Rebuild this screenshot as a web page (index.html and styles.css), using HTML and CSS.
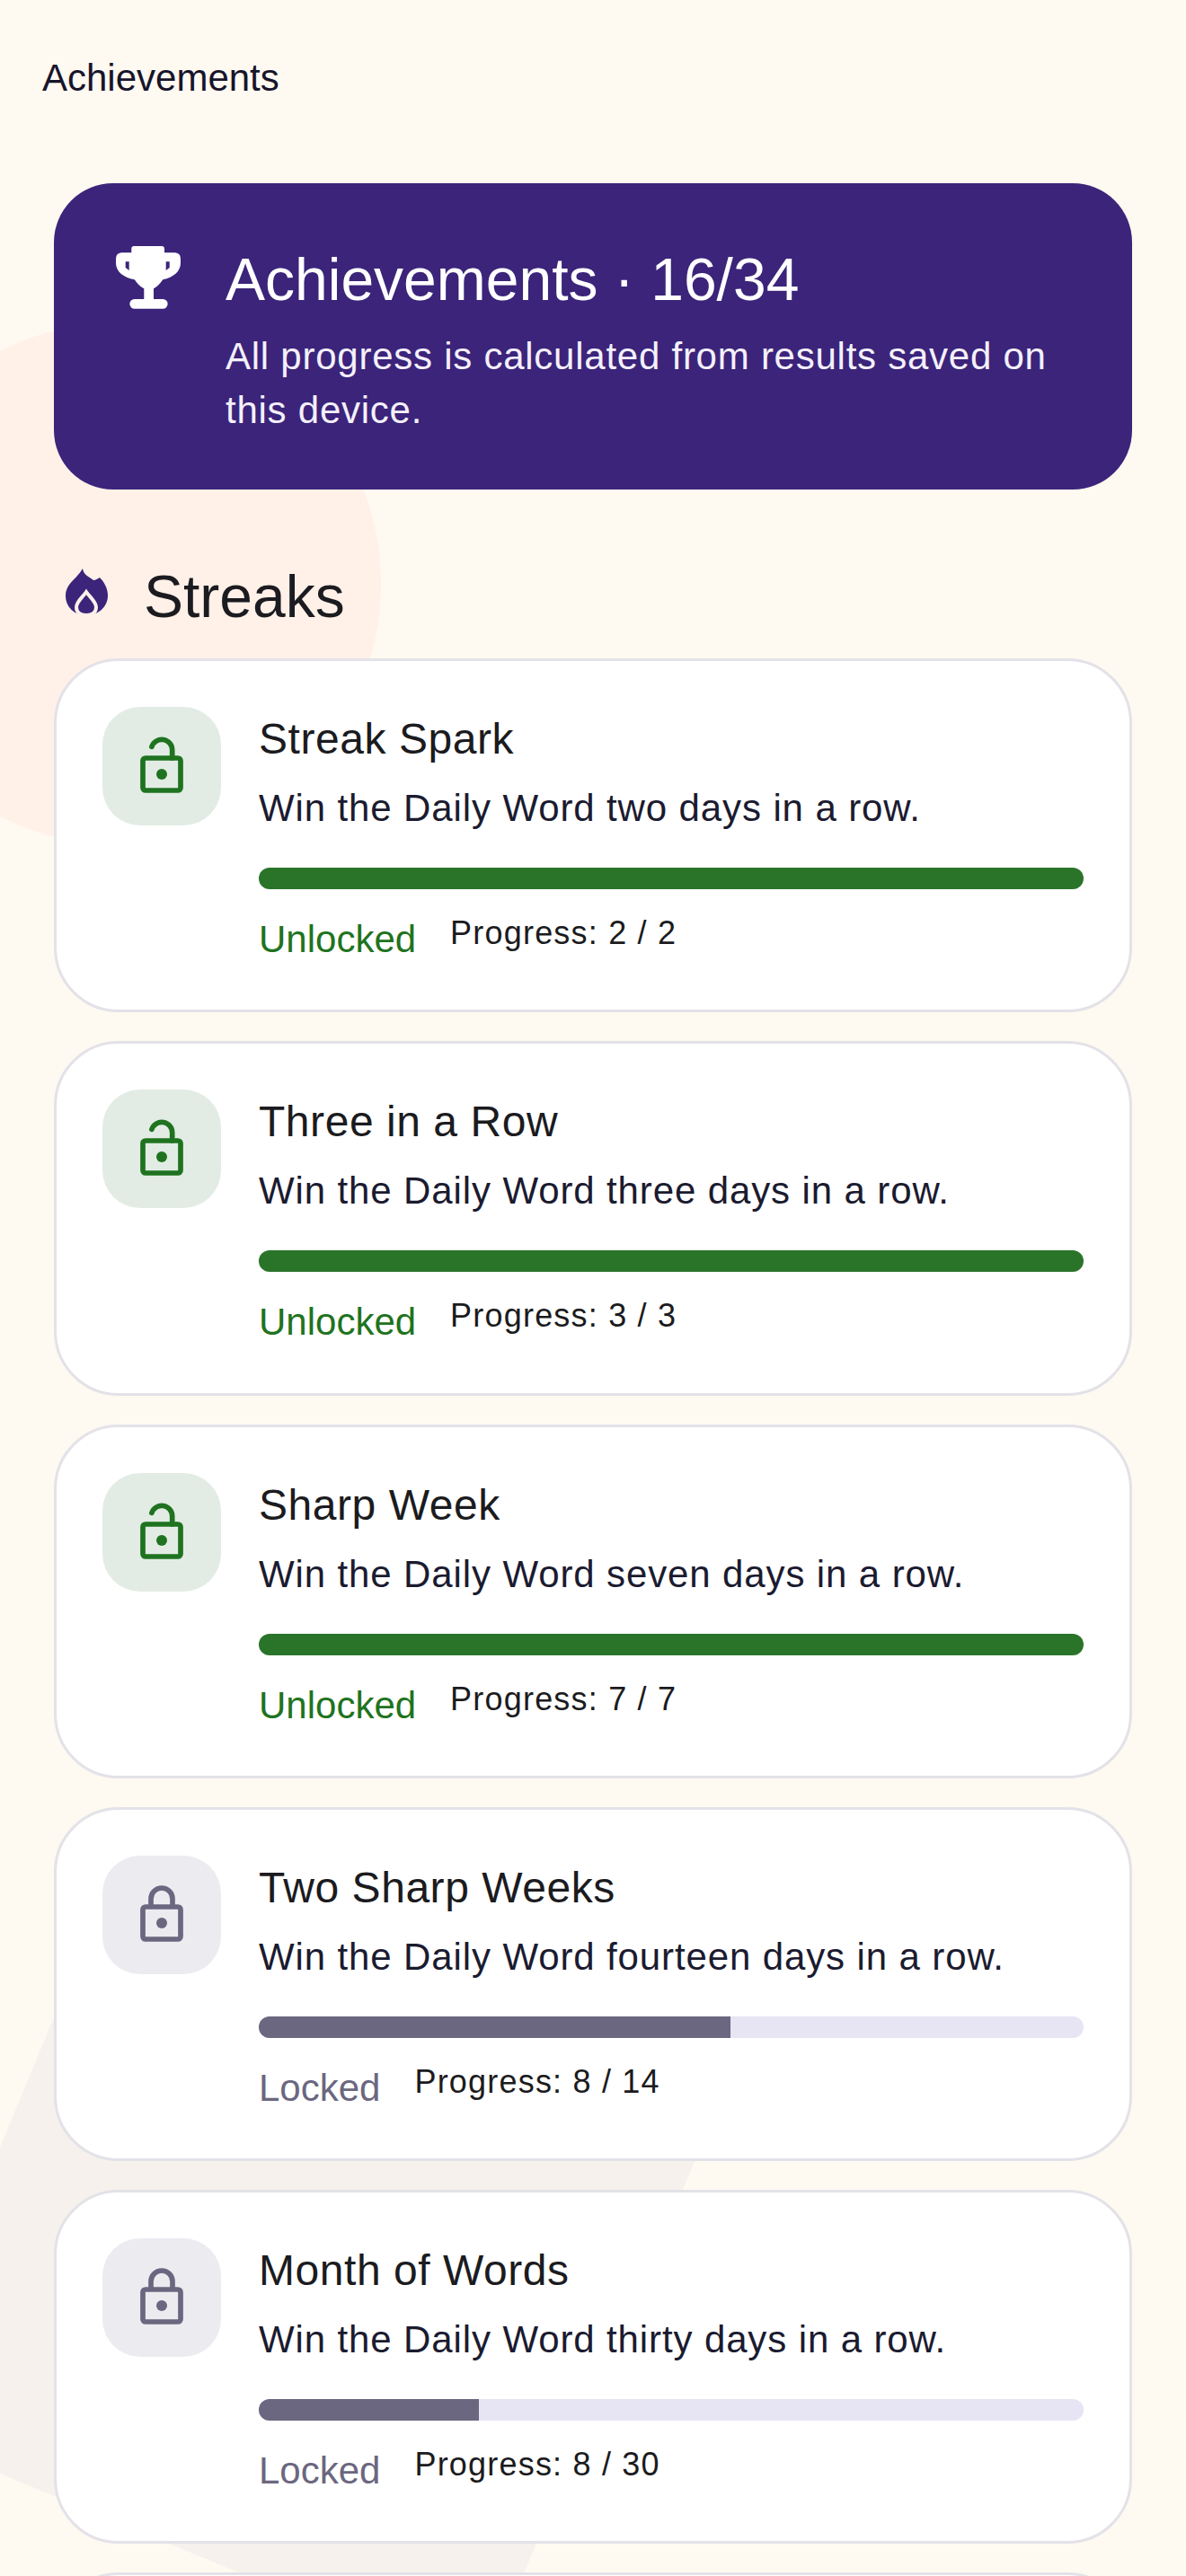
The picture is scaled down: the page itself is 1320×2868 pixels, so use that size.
FILE: index.html
```html
<!DOCTYPE html>
<html lang="en">
<head>
<meta charset="UTF-8">
<title>Achievements</title>
<link rel="stylesheet" href="styles.css">
</head>
<body>
<div class="blob blob-peach"></div>
<div class="blob blob-grey"></div>

<header class="appbar">Achievements</header>

<main class="content">
	<section class="banner">
		<svg class="banner-icon" viewBox="-6 -6 84 84"><path fill="#fff" fill-rule="evenodd" d="M20 1H51Q54 1 54 4V8.300H66Q72 9 72 15V20C72 29 64 36 52.300 38.300C49 43 46 46 42 48.300V60H52.300A5.300 5.300 0 0 1 52.300 70.700H20.700A5.300 5.300 0 0 1 20.700 60H31.300V48.300C27 46 24 43 20.700 38.300C8 36 0 29 0 20V15Q0 9 6 8.300H17.300V4Q17.300 1 20 1ZM10.700 18.300V25L14.700 28V18.300ZM55.700 18.300V28L59.700 25V18.300Z"/></svg>
		<div>
			<h1 class="banner-title">Achievements · 16/34</h1>
			<p class="banner-text">All progress is calculated from results saved on this device.</p>
		</div>
	</section>

	<h2 class="section-title">
		<svg class="section-icon" viewBox="0 0 48 53">
			<path fill="#3b247a" d="M20 1C21 8 27 10 32 14C34 14 37 12 39 11C44 16 48 23 48 31C48 44 37 53 24 53C11 53 1 44 1 31C1 20 10 14 14 9C16 7 18 4 20 1Z"/>
			<path fill="#3b247a" stroke="#fff1e8" stroke-width="4" d="M24 27C28 33 35 38 35 44C35 50 30 53 24 53C18 53 13 50 13 44C13 38 20 33 24 27Z"/>
		</svg>
		Streaks
	</h2>

	<article class="card unlocked">
		<div class="badge"><svg viewBox="0 0 24 24"><use href="#lock-open"/></svg></div>
		<div class="card-body">
			<h3 class="card-title">Streak Spark</h3>
			<p class="card-text">Win the Daily Word two days in a row.</p>
			<div class="track"><div class="fill" style="width:100%"></div></div>
			<div class="meta"><span class="status">Unlocked</span><span class="progress">Progress: 2 / 2</span></div>
		</div>
	</article>

	<article class="card unlocked">
		<div class="badge"><svg viewBox="0 0 24 24"><use href="#lock-open"/></svg></div>
		<div class="card-body">
			<h3 class="card-title">Three in a Row</h3>
			<p class="card-text">Win the Daily Word three days in a row.</p>
			<div class="track"><div class="fill" style="width:100%"></div></div>
			<div class="meta"><span class="status">Unlocked</span><span class="progress">Progress: 3 / 3</span></div>
		</div>
	</article>

	<article class="card unlocked">
		<div class="badge"><svg viewBox="0 0 24 24"><use href="#lock-open"/></svg></div>
		<div class="card-body">
			<h3 class="card-title">Sharp Week</h3>
			<p class="card-text">Win the Daily Word seven days in a row.</p>
			<div class="track"><div class="fill" style="width:100%"></div></div>
			<div class="meta"><span class="status">Unlocked</span><span class="progress">Progress: 7 / 7</span></div>
		</div>
	</article>

	<article class="card locked">
		<div class="badge"><svg viewBox="0 0 24 24"><use href="#lock-closed"/></svg></div>
		<div class="card-body">
			<h3 class="card-title">Two Sharp Weeks</h3>
			<p class="card-text">Win the Daily Word fourteen days in a row.</p>
			<div class="track"><div class="fill" style="width:57.14%"></div></div>
			<div class="meta"><span class="status">Locked</span><span class="progress">Progress: 8 / 14</span></div>
		</div>
	</article>

	<article class="card locked">
		<div class="badge"><svg viewBox="0 0 24 24"><use href="#lock-closed"/></svg></div>
		<div class="card-body">
			<h3 class="card-title">Month of Words</h3>
			<p class="card-text">Win the Daily Word thirty days in a row.</p>
			<div class="track"><div class="fill" style="width:26.67%"></div></div>
			<div class="meta"><span class="status">Locked</span><span class="progress">Progress: 8 / 30</span></div>
		</div>
	</article>

	<article class="card locked"></article>
</main>

<svg class="sprites" width="0" height="0">
	<symbol id="lock-open" viewBox="0 0 24 24">
		<g fill="none" stroke="currentColor" stroke-width="1.900" stroke-linecap="round">
			<rect x="5" y="9" width="14" height="12" rx="1"/>
			<path d="M8.300 4.800A3.900 3.900 0 0 1 15.900 6V9"/>
		</g>
		<circle cx="12" cy="15" r="2" fill="currentColor"/>
	</symbol>
	<symbol id="lock-closed" viewBox="0 0 24 24">
		<g fill="none" stroke="currentColor" stroke-width="1.900">
			<rect x="5" y="9" width="14" height="12" rx="1"/>
			<path d="M8 9V6a4 4 0 0 1 8 0v3"/>
		</g>
		<circle cx="12" cy="15" r="2" fill="currentColor"/>
	</symbol>
</svg>
</body>
</html>
```
FILE: styles.css
```css
*{
	margin: 0;
	padding: 0;
	box-sizing: border-box;
}
html,body{
	width: 100%;
	height: 100%;
	overflow: hidden;
}
body{
	position: relative;
	background-color: #fef9f1;
	color: #1b1b20;
	font-family: "Liberation Sans", Arial, sans-serif;
}

.blob{
	position: absolute;
}
.blob-peach{
	left: -158px;
	top: 359px;
	width: 582px;
	height: 582px;
	border-radius: 50%;
	background-color: #fff1e8;
}
.blob-grey{
	left: -18px;
	top: 2146px;
	width: 720px;
	height: 720px;
	border-radius: 60px;
	background-color: #f6f1ec;
	transform: rotate(22.5deg);
}

.appbar{
	position: relative;
	height: 204px;
	padding: 65px 0 0 47px;
	font-size: 42px;
	line-height: 44px;
	color: #17152b;
}

.content{
	position: relative;
	height: 2664px;
	overflow: hidden;
	padding: 0 60px;
	display: flex;
	flex-direction: column;
	gap: 32px;
}

.banner{
	display: flex;
	flex: none;
	gap: 44px;
	height: 341px;
	padding: 63px;
	background-color: #3b247a;
	border-radius: 66px;
	color: #fff;
}
.banner-icon{
	width: 84px;
	height: 84px;
	flex: none;
}
.banner-title{
	margin-top: 8px;
	font-size: 66px;
	font-weight: normal;
	line-height: 72px;
}
.banner-text{
	margin-top: 20px;
	font-size: 42px;
	line-height: 60px;
	letter-spacing: 0.75px;
	color: #f4f0fa;
}

.section-title{
	display: flex;
	flex: none;
	align-items: center;
	gap: 40px;
	margin-top: 45px;
	margin-bottom: -5px;
	font-size: 66px;
	font-weight: normal;
	line-height: 84px;
}
.section-icon{
	width: 48px;
	height: 53px;
	flex: none;
	margin-left: 12px;
	margin-bottom: 12px;
}

.card{
	display: flex;
	flex: none;
	gap: 42px;
	height: 394.25px;
	padding: 51px;
	background-color: #fff;
	border: 3px solid #e3e2e8;
	border-radius: 72px;
}
.badge{
	width: 132px;
	height: 132px;
	flex: none;
	display: flex;
	align-items: center;
	justify-content: center;
	border-radius: 42px;
}
.badge svg{
	width: 72px;
	height: 72px;
}
.unlocked .badge{
	background-color: #e2ece4;
	color: #1f7320;
}
.locked .badge{
	background-color: #ecebf0;
	color: #6b6780;
}
.card-body{
	flex: 1;
}
.card-title{
	margin-top: 8px;
	font-size: 48px;
	font-weight: normal;
	line-height: 56px;
	letter-spacing: 0.55px;
}
.card-text{
	margin-top: 21px;
	font-size: 42px;
	line-height: 56px;
	letter-spacing: 0.88px;
	color: #1b1b30;
}
.track{
	margin-top: 38px;
	height: 24px;
	border-radius: 12px;
	background-color: #e7e4f3;
	overflow: hidden;
}
.fill{
	height: 100%;
}
.unlocked .fill{
	background-color: #2a742a;
}
.locked .fill{
	background-color: #6b6780;
}
.meta{
	display: flex;
	align-items: flex-start;
	gap: 38px;
	margin-top: 27px;
}
.status{
	margin-top: 5px;
	font-size: 42px;
	line-height: 48px;
}
.unlocked .status{
	color: #1f7320;
}
.locked .status{
	color: #6b6780;
}
.progress{
	font-size: 36px;
	line-height: 44px;
	letter-spacing: 1.2px;
}
.sprites{
	position: absolute;
}
```
